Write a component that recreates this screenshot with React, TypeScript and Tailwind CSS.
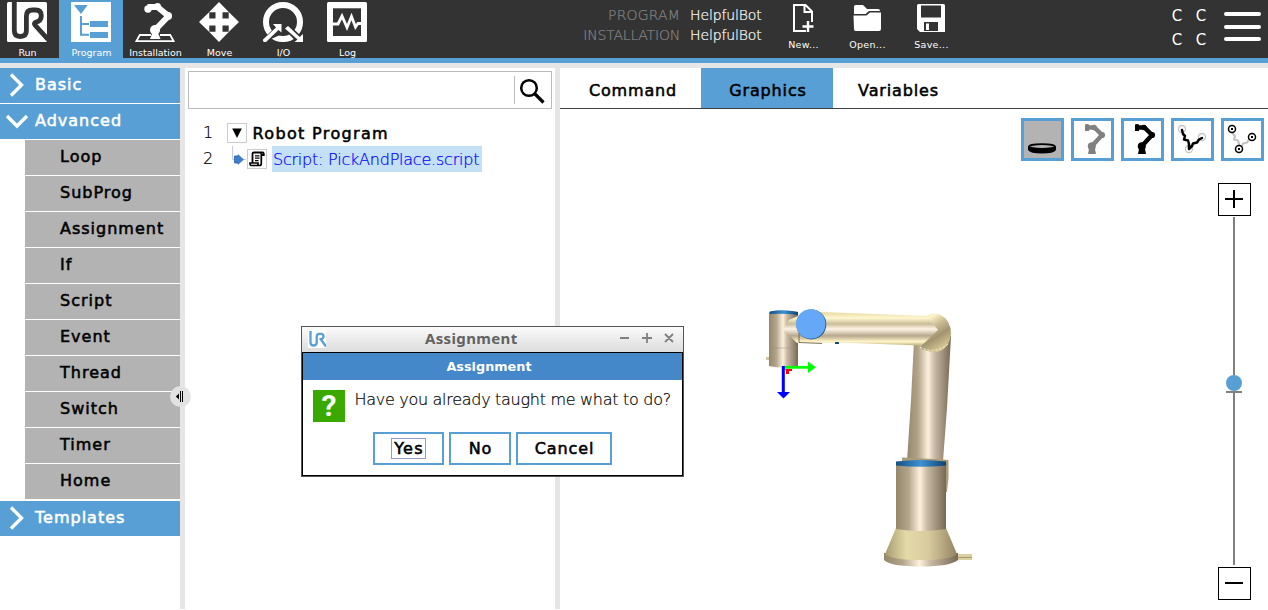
import type { ReactNode } from "react";

const strong = "font-normal [-webkit-text-stroke:0.55px_currentColor]";
const thin = "font-extralight [-webkit-text-stroke:0.2px_currentColor]";

function HeaderTab({ label, active, first, children }: { label: string; active?: boolean; first?: boolean; children: ReactNode }) {
  return (
    <button
      className={`flex h-[58px] flex-col items-center pt-[2px] text-white ${first ? "w-[59px] pr-[5px]" : "w-16"} ${active ? "bg-[#579fd4]" : ""}`}
    >
      <svg className="h-10 w-10 shrink-0" viewBox="0 0 40 40">
        {children}
      </svg>
      <span className="mt-[4px] whitespace-nowrap pl-px text-[9.5px] leading-[14px]">{label}</span>
    </button>
  );
}

function FileButton({ label, children }: { label: string; children: ReactNode }) {
  return (
    <button className="flex w-16 flex-col items-center pt-[4px] text-white">
      <svg className="h-7 w-7 shrink-0" viewBox="0 0 28 28">
        {children}
      </svg>
      <span className="mt-[6px] pl-px text-[9.5px] leading-[14px] tracking-[0.3px]">{label}</span>
    </button>
  );
}

function Header() {
  return (
    <header className="flex h-[63px] shrink-0 border-b-[5px] border-[#579fd4] bg-[#333333]">
      <nav className="flex">
        <HeaderTab label="Run" first>
          <rect width="40" height="40" rx="1.5" fill="#fff" />
          <path d="M7.3 0V28.5Q7.3 34.5 13.3 34.5Q19.4 34.5 19.4 28.5V14Q19.4 8 25.5 8H28.5Q34.3 8 34.3 13.8Q34.3 19.2 28.8 20.2Q26.6 21 28 23L41 37.5" fill="none" stroke="#333" strokeWidth="4.8" />
        </HeaderTab>
        <HeaderTab label="Program" active>
          <path d="M0 0H40V40H0Z" fill="#fff" />
          <path d="M3 3H16.7L10 12ZM9 14H11V21H18V23H11V31.7H18V33.7H9ZM19 19H37V25H19ZM19 30H37V36H19Z" fill="#579fd4" />
        </HeaderTab>
        <HeaderTab label="Installation">
          <path d="M16 33H4.8L1.3 39.2H38.7L35.2 33H25" fill="none" stroke="#fff" strokeWidth="1.8" />
          <path d="M12.5 5H22.5L33.5 14L20 28V37" fill="none" stroke="#fff" strokeWidth="6" strokeLinejoin="round" />
          <circle cx="13" cy="7" r="3.7" fill="#fff" />
          <circle cx="22.5" cy="4.5" r="3.5" fill="#fff" />
          <circle cx="33" cy="14" r="4" fill="#fff" />
          <circle cx="20" cy="28" r="5" fill="#fff" />
          <path d="M17 32H23.5L25.5 37H15Z" fill="#fff" />
        </HeaderTab>
        <HeaderTab label="Move">
          <path d="M20 0L30 10.3H23.5V16.5H29.7V10L40 20L29.7 30V23.5H23.5V29.7H30L20 40L10 29.7H16.5V23.5H10.3V30L0 20L10.3 10V16.5H16.5V10.3H10Z" fill="#fff" />
        </HeaderTab>
        <HeaderTab label="I/O">
          <circle cx="20" cy="20" r="17" fill="none" stroke="#fff" strokeWidth="6" />
          <path d="M0 39L14 26L10 22H18.5V30.5ZM22 26L25 24L36.8 35L40 32V40H36Z" fill="#333" stroke="#333" strokeWidth="3.2" />
          <path d="M0 39V37.5L13 25.6L10 22H18.5V30.5L15.5 28L3 40H1Z" fill="#fff" />
          <path d="M22 26.5L25 24L36.8 35L40 32V40H31.5L34.5 37.5Z" fill="#fff" />
        </HeaderTab>
        <HeaderTab label="Log">
          <rect width="40" height="40" rx="1.5" fill="#fff" />
          <path d="M6 6.3H34V34H6Z" fill="#333" />
          <path d="M6 22H11L15 14L20 25.5L24.5 14.5L28.5 25L31 21.5H34" fill="none" stroke="#fff" strokeWidth="2.8" />
        </HeaderTab>
      </nav>

      <dl className={`ml-[189px] mt-[5px] grid h-10 w-[196px] grid-cols-[112px_1fr] gap-x-[10px] text-[14px] leading-5 text-white ${thin}`}>
        <dt className="text-right tracking-[0.15px] text-[#858585]">PROGRAM</dt>
        <dd className="tracking-[-0.13px]">HelpfulBot</dd>
        <dt className="text-right tracking-[-0.2px] text-[#858585]">INSTALLATION</dt>
        <dd className="tracking-[-0.13px]">HelpfulBot</dd>
      </dl>

      <div className="ml-[7px] flex">
        <FileButton label="New...">
          <path d="M23 18V7.5L16.5 1H5V27H17M15.5 1V8H23" fill="none" stroke="#fff" strokeWidth="2" />
          <path d="M19 17V28M13.5 22.5H24.5" stroke="#fff" strokeWidth="2.4" />
        </FileButton>
        <FileButton label="Open...">
          <path d="M1 10V2.5Q1 1 2.5 1H10L14 5H25Q27 5 27 7H16L12.5 10Z" fill="#fff" />
          <path d="M0.5 11.5H13.5L17 8.5H28V25Q28 27 26 27H2.5Q1 27 1 25Z" fill="#fff" />
        </FileButton>
        <FileButton label="Save...">
          <path fillRule="evenodd" d="M1.5 0H26.5Q28 0 28 1.5V28H3L0 25V1.5Q0 0 1.5 0ZM4 1.5V13.5H24V1.5ZM7 18V27H21V18ZM9 19.5H12V26H9Z" fill="#fff" />
        </FileButton>
      </div>

      <div className="ml-auto mr-[11px] mt-[4px] grid h-12 w-12 grid-cols-2 text-center text-[15px] leading-6 text-white">
        <span>C</span>
        <span>C</span>
        <span>C</span>
        <span>C</span>
      </div>
      <button className="mr-[7px] mt-[12px] flex h-[29px] w-[37px] flex-col justify-between">
        <span className="h-[4px] w-full rounded-sm bg-white" />
        <span className="h-[4px] w-full rounded-sm bg-white" />
        <span className="h-[4px] w-full rounded-sm bg-white" />
      </button>
    </header>
  );
}

function Section({ label, open }: { label: string; open?: boolean }) {
  return (
    <button className={`flex h-[35px] w-full items-center bg-[#579fd4] pb-px text-white ${strong}`}>
      <svg className="h-6 w-[35px]" viewBox="0 0 35 24">
        <path d={open ? "M7 7L17 17L27 7" : "M11 1.5L21.5 12L11 22.5"} fill="none" stroke="#fff" strokeWidth="3.4" />
      </svg>
      <span className="mb-px text-[16px] leading-5 tracking-[1px]">{label}</span>
    </button>
  );
}

const advanced = ["Loop", "SubProg", "Assignment", "If", "Script", "Event", "Thread", "Switch", "Timer", "Home"];

function Sidebar() {
  return (
    <aside className="relative w-[185px] shrink-0 border-r-[5px] border-[#e6e6e6] bg-white">
      <div className="flex flex-col gap-px">
        <Section label="Basic" />
        <Section label="Advanced" open />
        <ul className="mb-px ml-[25px] flex flex-col gap-px">
          {advanced.map((item) => (
            <li key={item} className={`h-[35px] bg-[#b3b3b3] pl-[35px] text-[16px] leading-[33px] tracking-[1px] text-black ${strong}`}>
              {item}
            </li>
          ))}
        </ul>
        <Section label="Templates" />
      </div>
      <svg className="absolute left-[170px] top-[318px] z-10 h-[21px] w-[21px]" viewBox="0 0 21 21">
        <circle cx="10.5" cy="10.5" r="10.5" fill="#e2e2e2" />
        <path d="M5.8 10.5L9 7.5V13.5ZM10 5H11V16H10ZM12 5H13V16H12Z" fill="#000" />
      </svg>
    </aside>
  );
}

function ProgramTree() {
  return (
    <section className="w-[375px] shrink-0 border-r-[5px] border-[#e6e6e6] bg-white">
      <div className="ml-[3px] mt-[3px] flex h-[38px] w-[364px] items-center border border-[#bbbbbb]">
        <input className="h-full w-[325px] outline-none" aria-label="Search" />
        <span className="h-7 w-px bg-[#bbbbbb]" />
        <svg className="ml-1 h-7 w-7" viewBox="0 0 28 28">
          <circle cx="10" cy="12" r="7.8" fill="none" stroke="#000" strokeWidth="2.5" />
          <path d="M15.5 17.5L24.5 26.5" stroke="#000" strokeWidth="3.2" />
        </svg>
      </div>
      <div className="pt-[11px] text-[16px] leading-[26px] text-black">
        <div className="flex h-[26px] items-center">
          <span className={`w-[42px] pl-[18px] ${thin}`}>1</span>
          <span className="flex h-5 w-5 items-center justify-center border border-[#cccccc]">
            <svg className="h-3 w-3" viewBox="0 0 12 12">
              <path d="M1.2 1.5H10.8L6 11Z" />
            </svg>
          </span>
          <span className={`whitespace-nowrap pl-[5.5px] pt-px tracking-[1.35px] ${strong}`}>Robot Program</span>
        </div>
        <div className="flex h-[26px] items-center">
          <span className={`w-[42px] pl-[18px] ${thin}`}>2</span>
          <svg className="h-[26px] w-5" viewBox="0 0 20 26">
            <path d="M5.5 0V13.5H19" fill="none" stroke="#c6c6fa" />
            <path d="M7.5 10H11V8.8L16.3 13.5L11 18.2V17H7.5Z" fill="#3d80c9" stroke="#2565a8" strokeWidth=".8" />
          </svg>
          <span className="flex h-5 w-5 items-center justify-center border border-[#cccccc]">
            <svg className="h-4 w-4" viewBox="0 0 16 16" fill="none" stroke="#000">
              <path d="M3.5 12V2.5Q3.5 1.5 5 1.5H13.5Q15 1.5 14.8 4H12.3" strokeWidth="1.8" />
              <path d="M12.3 2V12.5Q12.3 14.5 10.5 14.5H2.5Q.8 14.5 1 12H9V14" strokeWidth="1.7" />
              <path d="M6 4.8H10.5M6 7.2H10.5M6 9.6H9.5" strokeWidth="1.3" />
            </svg>
          </span>
          <span className={`mb-px ml-[5px] h-[26px] w-[210px] whitespace-nowrap bg-[#c3e0f5] pl-px leading-[28px] tracking-[-0.22px] text-[#0000ff] ${thin}`}>Script: PickAndPlace.script</span>
        </div>
      </div>
    </section>
  );
}

function ToolButton({ pressed, children }: { pressed?: boolean; children: ReactNode }) {
  return (
    <button className={`h-[43px] w-[43px] border-[3px] border-[#579fd4] ${pressed ? "bg-[#b3b3b3]" : "bg-white"}`}>
      <svg className="h-[37px] w-[37px]" viewBox="3 3 37 37">
        {children}
      </svg>
    </button>
  );
}

function MiniArm({ color }: { color: string }) {
  return (
    <g fill={color} stroke="none">
      <path d="M16 9.5H23.5L31 17L21 28V33" fill="none" stroke={color} strokeWidth="4.4" strokeLinejoin="round" />
      <path d="M14 6.5Q16 5.3 18 6.5V13H14ZM18 31H24L25 36H17Z" />
      <circle cx="23" cy="9.5" r="2.7" />
      <circle cx="31" cy="17" r="3.1" />
      <circle cx="20.8" cy="28.2" r="4" />
    </g>
  );
}

const route = "M11 12L12 16L14 18L13 21.5L17 22.5L18 26L18 31L21 28L22 25.5L26 24.5L28 21.5L31 20";

function Robot() {
  return (
    <svg className="absolute inset-0 h-full w-full" viewBox="560 109 708 500">
      <defs>
        <linearGradient id="metal">
          <stop offset="0" stopColor="#95876a" />
          <stop offset=".25" stopColor="#b3a58b" />
          <stop offset=".48" stopColor="#fff0dd" />
          <stop offset=".62" stopColor="#c9bba5" />
          <stop offset="1" stopColor="#776853" />
        </linearGradient>
        <linearGradient id="beam" x2="0" y2="1">
          <stop offset="0" stopColor="#e6d99e" />
          <stop offset=".18" stopColor="#fff7d0" />
          <stop offset=".35" stopColor="#c9bc98" />
          <stop offset=".5" stopColor="#fff3e6" />
          <stop offset=".7" stopColor="#b6a88d" />
          <stop offset=".87" stopColor="#fff5c8" />
          <stop offset="1" stopColor="#b8aa78" />
        </linearGradient>
        <linearGradient id="elbow" x2=".5" y2="1">
          <stop offset="0" stopColor="#d5c793" />
          <stop offset=".2" stopColor="#fff5cc" />
          <stop offset=".45" stopColor="#c9bb92" />
          <stop offset=".7" stopColor="#a2946f" />
          <stop offset="1" stopColor="#d5c793" />
        </linearGradient>
        <linearGradient id="cone">
          <stop offset="0" stopColor="#a99d70" />
          <stop offset=".3" stopColor="#e4d9a8" />
          <stop offset=".6" stopColor="#d8cc9f" />
          <stop offset="1" stopColor="#948362" />
        </linearGradient>
        <linearGradient id="ring">
          <stop offset="0" stopColor="#155084" />
          <stop offset=".5" stopColor="#3e91d2" />
          <stop offset="1" stopColor="#0d426f" />
        </linearGradient>
      </defs>
      <path d="M914 340L911 400L907 461H943L947 408L951 336Z" fill="url(#metal)" />
      <path d="M902 457.5L943 459.5L948.5 460V478L947 492H945V463H902Z" fill="#a99c78" />
      <path d="M958 554H972V560H958Z" fill="#ddd09f" />
      <path d="M958 557.5H972" stroke="#a89b72" />
      <path d="M884 553H958V560Q950 566.5 921 566.5Q890 566.5 884 560Z" fill="url(#metal)" />
      <path d="M896 528L885 554Q892 560 921 560Q951 560 957 554L946 528Z" fill="url(#cone)" />
      <path d="M896 464H946V529Q921 533 896 529Z" fill="url(#metal)" />
      <path d="M896 461.5Q921 458.5 946 461.5V465.5Q921 468 896 465.5Z" fill="url(#ring)" />
      <path d="M769 312Q783 309 798 312V366Q784 369 769 366Z" fill="url(#metal)" />
      <path d="M770 348H797" stroke="#9d9076" strokeWidth=".5" />
      <path d="M770 311.5Q783 309 798 312V315Q783 313 770 314Z" fill="url(#ring)" />
      <path d="M766 357H769V360H766Z" fill="#d3c59a" />
      <path d="M798 316L820 312L930 316L940 330L932 346L840 342.5L797 343L783 329L789 320Z" fill="url(#beam)" />
      <path d="M799 333V342.5L822 343.5" fill="none" stroke="#62563d" strokeWidth=".8" />
      <path d="M835 342H839V344H835Z" fill="#184b75" />
      <path d="M927 316Q933 312 940 314.5Q951 320 951 334Q949 350 936 352Q923 351.5 920 347L938 330Z" fill="url(#elbow)" />
      <path d="M920 347Q935 355 948 344" fill="none" stroke="#fff9df" strokeDasharray="2 2" />
      <circle cx="811.3" cy="324.4" r="15" fill="#184b75" />
      <circle cx="810.8" cy="324" r="14.8" fill="#65a8f8" />
      <path d="M784 367.3H808" stroke="#00ff00" strokeWidth="2.8" />
      <path d="M808 361.5V373L816 367.3Z" fill="#00ff00" />
      <path d="M785 369H792V371H789V374H786V371Z" fill="#ff0000" />
      <path d="M783.3 366V394" stroke="#0000ff" strokeWidth="3" />
      <path d="M777 392H790L783.5 398.5Z" fill="#0000ff" />
    </svg>
  );
}

function ZoomSlider() {
  return (
    <div className="relative mr-[17px] mt-[22px] flex w-[33px] flex-col items-center self-end">
      <button className="flex h-[33px] w-[33px] items-center justify-center border border-black bg-white pb-px pr-px">
        <svg className="h-[18px] w-[18px]" viewBox="0 0 18 18">
          <path d="M9 0V18M0 9H18" stroke="#000" strokeWidth="2" />
        </svg>
      </button>
      <div className="my-px mr-px flex h-[349px] w-4 flex-col items-center">
        <span className="h-[158px] w-[2px] bg-[#808080]" />
        <span className="h-4 w-4 rounded-full bg-[#579fd4]" />
        <span className="h-[2px] w-4 bg-[#808080]" />
        <span className="h-[172px] w-[2px] bg-[#808080]" />
      </div>
      <button className="flex h-[33px] w-[33px] items-center justify-center border border-black bg-white pb-px pr-px">
        <span className="h-[2px] w-[18px] bg-black" />
      </button>
    </div>
  );
}

function Graphics() {
  return (
    <section className="flex min-w-0 flex-1 flex-col bg-white">
      <div className={`flex h-[41px] border-b border-[#404040] text-[16px] leading-[45px] tracking-[0.85px] text-black ${strong}`}>
        <button className="h-10 w-[141px] pl-[5px]">Command</button>
        <button className="h-10 w-[132px] bg-[#579fd4] pl-[2px]">Graphics</button>
        <button className="h-10 w-[131px]">Variables</button>
      </div>
      <div className="relative flex flex-1 flex-col">
        <Robot />
        <div className="relative mr-1 mt-[9px] flex gap-[7px] self-end">
          <ToolButton pressed>
            <path d="M7 28.5V32Q9 35.5 21 35.5Q33 35.5 35 32V28.5Z" />
            <ellipse cx="21" cy="28.5" rx="13" ry="2.4" fill="#b3b3b3" stroke="#000" strokeWidth="1.7" />
          </ToolButton>
          <ToolButton>
            <MiniArm color="#808080" />
          </ToolButton>
          <ToolButton>
            <MiniArm color="#000000" />
          </ToolButton>
          <ToolButton>
            <g fill="none" stroke="#c4c4c4" strokeWidth="1.3">
              <circle cx="11" cy="11" r="3.5" />
              <circle cx="31" cy="19" r="3.5" />
              <circle cx="18" cy="31" r="3.5" />
            </g>
            <path d={route} fill="none" stroke="#000" strokeWidth="2.5" strokeLinejoin="round" strokeLinecap="round" />
          </ToolButton>
          <ToolButton>
            <path d={route} fill="none" stroke="#c4c4c4" strokeWidth="2.2" strokeLinejoin="round" />
            <g fill="#fff" stroke="#000" strokeWidth="1.5">
              <circle cx="11" cy="11" r="3.5" />
              <circle cx="31" cy="19" r="3.5" />
              <circle cx="18" cy="31" r="3.5" />
            </g>
            <path d="M10 10H12V12H10ZM30 18H32V20H30ZM17 30H19V32H17Z" />
          </ToolButton>
        </div>
        <ZoomSlider />
      </div>
    </section>
  );
}

function Dialog() {
  const button = `h-[33px] border-2 border-[#579fd4] bg-white pl-px text-[16px] leading-[29px] tracking-[0.9px] ${strong}`;
  return (
    <div role="dialog" className="absolute left-[301px] top-[326px] z-20 flex h-[151px] w-[383px] flex-col border border-[#555555] bg-white">
      <div className="flex h-[25px] shrink-0 items-center bg-linear-to-b from-[#fbfbfb] to-[#dcdcdc] pb-[3px] pl-[6px] pr-[8px]">
        <svg className="mt-[2px] h-[18px] w-[18px]" viewBox="0 0 18 18">
          <path d="M0 0H18V18H0Z" fill="#fff" />
          <path d="M2.5 1V12.5Q2.5 15.5 5.5 15.5Q8.7 15.5 8.7 12.5V6.5Q8.7 3.8 11.5 3.8H13Q15.5 3.8 15.5 6.3Q15.5 8.7 12.8 9.2L18 16.5" fill="none" stroke="#579fd4" strokeWidth="2.3" />
        </svg>
        <span className="ml-[99px] font-['Noto_Sans'] text-[15px] font-bold leading-5 tracking-[0.35px] text-[#626262]">Assignment</span>
        <svg className="ml-auto h-3 w-[56px]" viewBox="0 0 56 12" fill="none" stroke="#808080" strokeWidth="1.8">
          <path d="M1 6H10M23 6H33M28 1V11M46 2L54 10M54 2L46 10" />
        </svg>
      </div>
      <div className="flex flex-1 flex-col border border-black">
        <div className="h-[27px] bg-[#4488c9] text-center text-[12.8px] font-bold leading-[27px] text-white">
          <span className="pr-[7px]">Assignment</span>
        </div>
        <div className="flex pl-[10px] pt-[10px]">
          <span className="flex h-8 w-8 items-center justify-center bg-[#39a900] font-['Roboto'] text-[30px] font-bold leading-8 text-white">?</span>
          <p className={`whitespace-nowrap pl-[9.5px] text-[16px] leading-[19px] tracking-[-0.29px] text-black ${thin}`}>Have you already taught me what to do?</p>
        </div>
        <div className="mt-[10px] flex gap-[5px] pl-[70px] text-black">
          <button className={`w-[71px] ${button}`}>
            <span className="ml-[15px] flex h-[21px] w-[35px] items-center justify-center border border-[#9999cc] pl-px tracking-[1.3px]">Yes</span>
          </button>
          <button className={`w-[62px] ${button}`}>No</button>
          <button className={`w-[96px] ${button}`}>Cancel</button>
        </div>
      </div>
    </div>
  );
}

export default function App() {
  return (
    <div className="relative flex h-[610px] w-[1268px] flex-col overflow-hidden bg-white font-['DejaVu_Sans',sans-serif]">
      <Header />
      <main className="flex h-[546px] shrink-0 border-t-[5px] border-[#e6e6e6]">
        <Sidebar />
        <ProgramTree />
        <Graphics />
      </main>
      <Dialog />
    </div>
  );
}
